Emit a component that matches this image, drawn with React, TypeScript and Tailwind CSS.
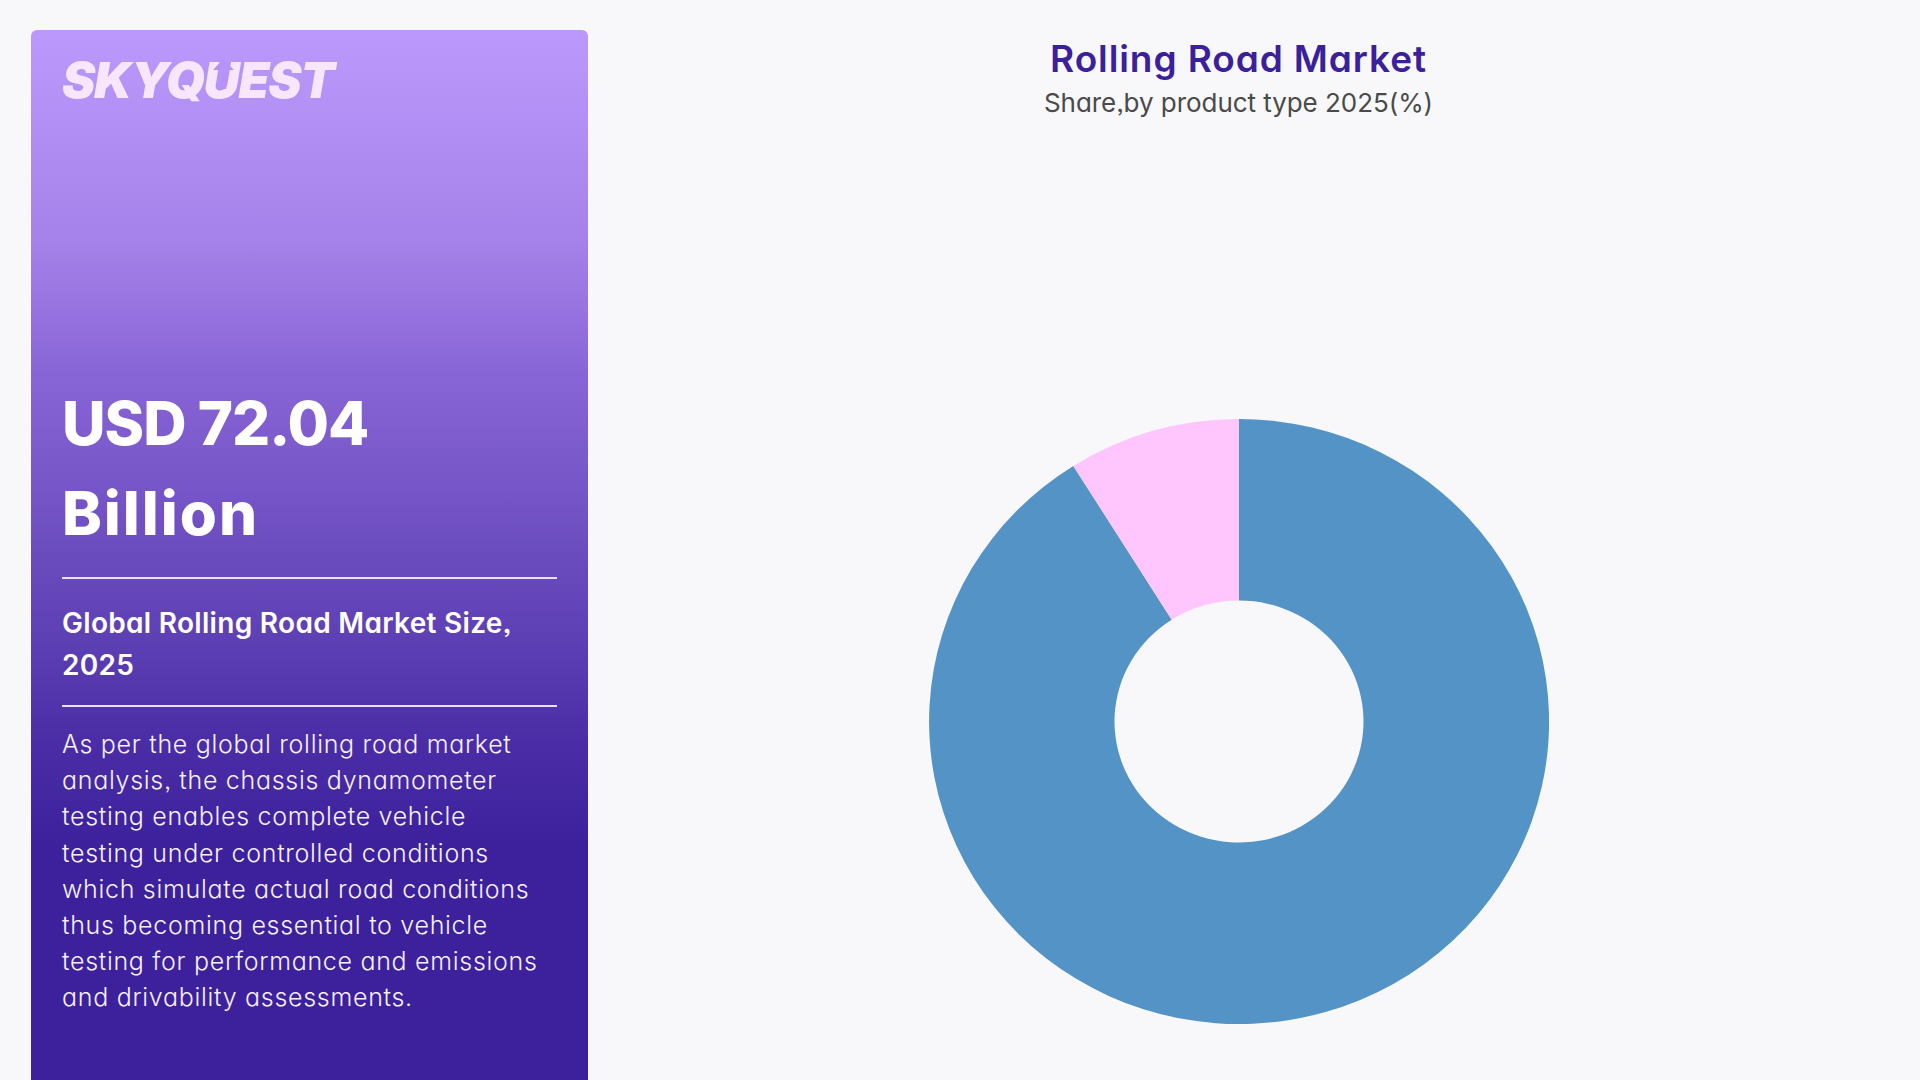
export default function App() {
  const lines = [
    "As per the global rolling road market",
    "analysis, the chassis dynamometer",
    "testing enables complete vehicle",
    "testing under controlled conditions",
    "which simulate actual road conditions",
    "thus becoming essential to vehicle",
    "testing for performance and emissions",
    "and drivability assessments.",
  ];
  return (
    <div className="flex h-screen w-full overflow-hidden bg-[#f8f8fb] pl-[31px] pr-[31px] pt-[30px] font-['Inter',sans-serif] [font-feature-settings:'cv11','ss03']">
      <aside className="flex w-[557px] shrink-0 flex-col rounded-t-[6px] bg-[linear-gradient(180deg,#bb99fc_0%,#a582e9_20%,#8865d6_33%,#5d40b4_58%,#4a2da6_68%,#3c209c_78%,#3c209c_100%)] px-[31px] text-white">
        <div className="relative mt-[28px] h-[44px] w-fit">
          <span className="block font-['Inter',sans-serif] text-[50px] leading-[44px] font-black tracking-[-1.2px] text-[#f8e6ff] italic">
            SKYQUEST
          </span>
          <svg className="absolute top-[1px] left-[150px]" width="24" height="30" viewBox="0 0 24 30">
            <path d="M11 0 L22 11 L16 11 L14 30 L8 30 L10 11 L1 11 Z" fill="#b592f5" />
          </svg>
        </div>
        <h1 className="mt-[276px] text-[60px] leading-[90px] font-extrabold">
          <span className="block tracking-[-1px]">USD 72.04</span>
          <span className="block tracking-[2px]">Billion</span>
        </h1>
        <div className="mt-[19px] h-[2px] w-full bg-[#e9e2fb]" />
        <h2 className="mt-[23px] text-[28px] leading-[42px] font-semibold tracking-[0.3px]">Global Rolling Road Market Size,<br />2025</h2>
        <div className="mt-[19px] h-[2px] w-full bg-[#e9e2fb]" />
        <p className="mt-[19px] text-[25px] leading-[36.2px] font-light tracking-[0.7px] text-[#f6f1ff]">
          {lines.map((l) => (
            <span key={l} className="block whitespace-nowrap">{l}</span>
          ))}
        </p>
      </aside>
      <main className="flex min-w-0 flex-1 flex-col items-center">
        <h2 className="mt-[7px] text-[37px] leading-[44px] font-semibold tracking-[0.9px] text-[#3a219b]">Rolling Road Market</h2>
        <p className="mt-[1px] text-[26px] leading-[42px] tracking-[-0.05px] text-[#4a4a4a]">Share,by product type 2025(%)</p>
        <svg className="mt-[295px] block shrink-0" width="620" height="605" viewBox="0 0 620 605">
          <path d="M310 0 A310 302.5 0 1 1 144.3 46.9 L242.7 200.7 A124.5 121 0 1 0 310 181.5 Z" fill="#5493c6" />
          <path d="M310 0 A310 302.5 0 0 0 144.3 46.9 L242.7 200.7 A124.5 121 0 0 1 310 181.5 Z" fill="#fec6fd" />
        </svg>
      </main>
    </div>
  );
}
